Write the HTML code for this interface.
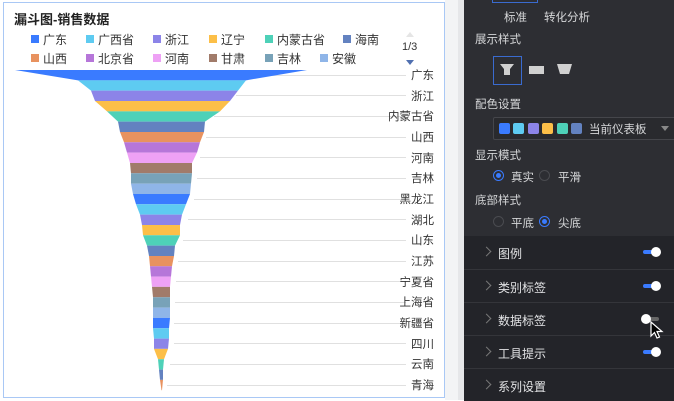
<!DOCTYPE html>
<html><head><meta charset="utf-8"><style>
*{margin:0;padding:0;box-sizing:border-box}
body{width:674px;height:400px;overflow:hidden;background:#fff;font-family:"Liberation Sans","Noto Sans CJK SC",sans-serif;position:relative}
.a{position:absolute;white-space:nowrap}
#chart{position:absolute;left:3px;top:2px;width:442px;height:396px;border:1px solid #a9c8f5;background:#fff}
#strip{position:absolute;left:445px;top:0;width:19px;height:400px;background:#f3f4f5}
#strip2{position:absolute;left:458px;top:0;width:6px;height:400px;background:#e6e7e9}
#panel{position:absolute;left:464px;top:0;width:210px;height:400px;background:#2d2e33;color:#d5d6d8;font-size:11.5px}
.lg{font-size:12px;color:#333}
.sq{position:absolute;width:8px;height:8px}
.lb{position:absolute;right:240px;font-size:11.5px;color:#333;text-align:right}
.row{position:absolute;left:0;width:210px;height:33px;border-top:1px solid #34353a;background:#232429}
.row span{position:absolute;left:34px;top:9px;color:#e2e3e5;font-size:12px}
.chev{position:absolute;left:19px;top:12px;width:7px;height:7px;border-right:1.3px solid #777;border-top:1.3px solid #777;transform:rotate(45deg)}
.tg{position:absolute;left:179px;top:14px;width:16px;height:4px;border-radius:2px;background:#3a7bff}
.tg i{position:absolute;right:-2px;top:-3px;width:10px;height:10px;border-radius:50%;background:#fff}
.rad{position:absolute;width:11px;height:11px;border-radius:50%;border:1px solid #4a4b50}
.rad.on{border-color:#3a7bff}
.rad.on:after{content:"";position:absolute;left:2px;top:2px;width:5px;height:5px;border-radius:50%;background:#3a7bff}
</style></head><body>
<div id="chart"></div>
<div id="strip"></div><div id="strip2"></div>
<div class="a" style="left:14px;top:9px;font-size:13px;font-weight:bold;color:#222">漏斗图-销售数据</div>
<div class="sq" style="left:31px;top:35px;background:#3a7bff"></div><div class="a lg" style="left:43px;top:31px">广东</div>
<div class="sq" style="left:86px;top:35px;background:#5ecbf1"></div><div class="a lg" style="left:98px;top:31px">广西省</div>
<div class="sq" style="left:153px;top:35px;background:#8c84e8"></div><div class="a lg" style="left:165px;top:31px">浙江</div>
<div class="sq" style="left:209px;top:35px;background:#fcbf48"></div><div class="a lg" style="left:221px;top:31px">辽宁</div>
<div class="sq" style="left:265px;top:35px;background:#4ed1b8"></div><div class="a lg" style="left:277px;top:31px">内蒙古省</div>
<div class="sq" style="left:343px;top:35px;background:#6382c0"></div><div class="a lg" style="left:355px;top:31px">海南</div>
<div class="sq" style="left:31px;top:54px;background:#e8925f"></div><div class="a lg" style="left:43px;top:50px">山西</div>
<div class="sq" style="left:86px;top:54px;background:#b676d9"></div><div class="a lg" style="left:98px;top:50px">北京省</div>
<div class="sq" style="left:153px;top:54px;background:#eea1f5"></div><div class="a lg" style="left:165px;top:50px">河南</div>
<div class="sq" style="left:209px;top:54px;background:#a17b6a"></div><div class="a lg" style="left:221px;top:50px">甘肃</div>
<div class="sq" style="left:265px;top:54px;background:#78a2b8"></div><div class="a lg" style="left:277px;top:50px">吉林</div>
<div class="sq" style="left:320px;top:54px;background:#8fb5e8"></div><div class="a lg" style="left:332px;top:50px">安徽</div>
<div class="a" style="left:406px;top:32px;width:0;height:0;border-left:4px solid transparent;border-right:4px solid transparent;border-bottom:5px solid #e5e5e5"></div>
<div class="a" style="left:402px;top:41px;font-size:11px;color:#333">1/3</div>
<div class="a" style="left:406px;top:60px;width:0;height:0;border-left:4px solid transparent;border-right:4px solid transparent;border-top:5px solid #5070b0"></div>
<svg class="a" style="left:0;top:0" width="445" height="400">
<g stroke="#e0e0e0" stroke-width="1">
<line x1="250" y1="75.5" x2="406" y2="75.5"/><line x1="236" y1="95.5" x2="406" y2="95.5"/><line x1="214" y1="116.5" x2="406" y2="116.5"/><line x1="206" y1="137.5" x2="406" y2="137.5"/><line x1="200" y1="157.5" x2="406" y2="157.5"/><line x1="197" y1="178.5" x2="406" y2="178.5"/><line x1="194" y1="199.5" x2="406" y2="199.5"/><line x1="188" y1="219.5" x2="406" y2="219.5"/><line x1="183" y1="240.5" x2="406" y2="240.5"/><line x1="178" y1="261.5" x2="406" y2="261.5"/><line x1="176" y1="281.5" x2="406" y2="281.5"/><line x1="175" y1="302.5" x2="406" y2="302.5"/><line x1="174" y1="323.5" x2="406" y2="323.5"/><line x1="174" y1="343.5" x2="406" y2="343.5"/><line x1="170" y1="364.5" x2="406" y2="364.5"/><line x1="167" y1="385.5" x2="406" y2="385.5"/>
</g>
<g id="f"></g>
</svg>
<div class="lb" style="top:67px">广东</div><div class="lb" style="top:88px">浙江</div><div class="lb" style="top:108px">内蒙古省</div><div class="lb" style="top:129px">山西</div><div class="lb" style="top:150px">河南</div><div class="lb" style="top:170px">吉林</div><div class="lb" style="top:191px">黑龙江</div><div class="lb" style="top:212px">湖北</div><div class="lb" style="top:232px">山东</div><div class="lb" style="top:253px">江苏</div><div class="lb" style="top:274px">宁夏省</div><div class="lb" style="top:294px">上海省</div><div class="lb" style="top:315px">新疆省</div><div class="lb" style="top:336px">四川</div><div class="lb" style="top:356px">云南</div><div class="lb" style="top:377px">青海</div>
<script>
var L=[15,78,91,95,107,118,120,124,127,130,131,131,133,136,140,142,143,147,149,150,151,152,153,153,153,153,154,154,158,159,160,161.5];
var R=[307,246,238,230,220,205,204,200,197,192,192,191,190,186,182,180,180,175,174,172,171,170,170,170,170,169,169,168,164,163,163,162];
var C=["#3a7bff","#5ecbf1","#8c84e8","#fcbf48","#4ed1b8","#6382c0","#e8925f","#b676d9","#eea1f5","#a17b6a","#78a2b8","#8fb5e8"];
var s="";for(var i=0;i<31;i++){var y0=70+i*10.33,y1=y0+10.33;s+='<polygon fill="'+C[i%12]+'" points="'+L[i]+','+y0+' '+R[i]+','+y0+' '+R[i+1]+','+y1+' '+L[i+1]+','+y1+'"/>';}
document.getElementById("f").innerHTML=s;
</script>
<div id="panel">
<div class="a" style="left:28px;top:-2px;width:46px;height:5px;border:1px solid #3a6bd0;border-top:none"></div>
<div class="a" style="left:40px;top:9px">标准</div><div class="a" style="left:80px;top:9px">转化分析</div>
<div class="a" style="left:11px;top:31px">展示样式</div>
<div class="a" style="left:29px;top:56px;width:29px;height:29px;border:1px solid #3a6bd0"></div>
<svg class="a" style="left:36px;top:64px" width="16" height="12"><polygon points="0,0 14,0 10,5 10,11 4,11 4,5" fill="#d0d0d0"/></svg>
<div class="a" style="left:65px;top:66px;width:15px;height:8px;background:#d0d0d0"></div>
<svg class="a" style="left:93px;top:64px" width="16" height="11"><polygon points="0,0 15,0 12,10 3,10" fill="#d0d0d0"/></svg>
<div class="a" style="left:11px;top:96px">配色设置</div>
<div class="a" style="left:29px;top:117px;width:185px;height:23px;border:1px solid #45464b;border-radius:2px;background:#292a2e"></div>
<div class="sq" style="left:35px;top:123px;width:11px;height:11px;border-radius:2px;background:#3a7bff"></div>
<div class="sq" style="left:49px;top:123px;width:11px;height:11px;border-radius:2px;background:#5ecbf1"></div>
<div class="sq" style="left:64px;top:123px;width:11px;height:11px;border-radius:2px;background:#8c84e8"></div>
<div class="sq" style="left:78px;top:123px;width:11px;height:11px;border-radius:2px;background:#fcbf48"></div>
<div class="sq" style="left:93px;top:123px;width:11px;height:11px;border-radius:2px;background:#4ed1b8"></div>
<div class="sq" style="left:107px;top:123px;width:11px;height:11px;border-radius:2px;background:#6382c0"></div>
<div class="a" style="left:125px;top:121px">当前仪表板</div>
<div class="a" style="left:197px;top:126px;border-left:4px solid transparent;border-right:4px solid transparent;border-top:5px solid #888"></div>
<div class="a" style="left:11px;top:147px">显示模式</div>
<div class="rad on" style="left:29px;top:170px"></div><div class="a" style="left:47px;top:169px">真实</div>
<div class="rad" style="left:75px;top:170px"></div><div class="a" style="left:94px;top:169px">平滑</div>
<div class="a" style="left:11px;top:192px">底部样式</div>
<div class="rad" style="left:29px;top:216px"></div><div class="a" style="left:47px;top:215px">平底</div>
<div class="rad on" style="left:75px;top:216px"></div><div class="a" style="left:94px;top:215px">尖底</div>
<div class="row" style="top:236px;border-top:none"><div class="chev"></div><span>图例</span><div class="tg"><i></i></div></div>
<div class="row" style="top:269px"><div class="chev"></div><span>类别标签</span><div class="tg"><i></i></div></div>
<div class="row" style="top:302px"><div class="chev"></div><span>数据标签</span><div class="tg" style="background:#666"><i style="right:auto;left:-2px"></i></div></div>
<div class="row" style="top:335px"><div class="chev"></div><span>工具提示</span><div class="tg"><i></i></div></div>
<div class="row" style="top:368px"><div class="chev"></div><span>系列设置</span></div>
<svg class="a" style="left:186px;top:321px" width="14" height="20"><path d="M1,1 L1,15 L4.5,11.5 L7,17 L9.5,16 L7,10.5 L12,10.5 Z" fill="#000" stroke="#fff" stroke-width="1.2"/></svg>
</div>
</body></html>
